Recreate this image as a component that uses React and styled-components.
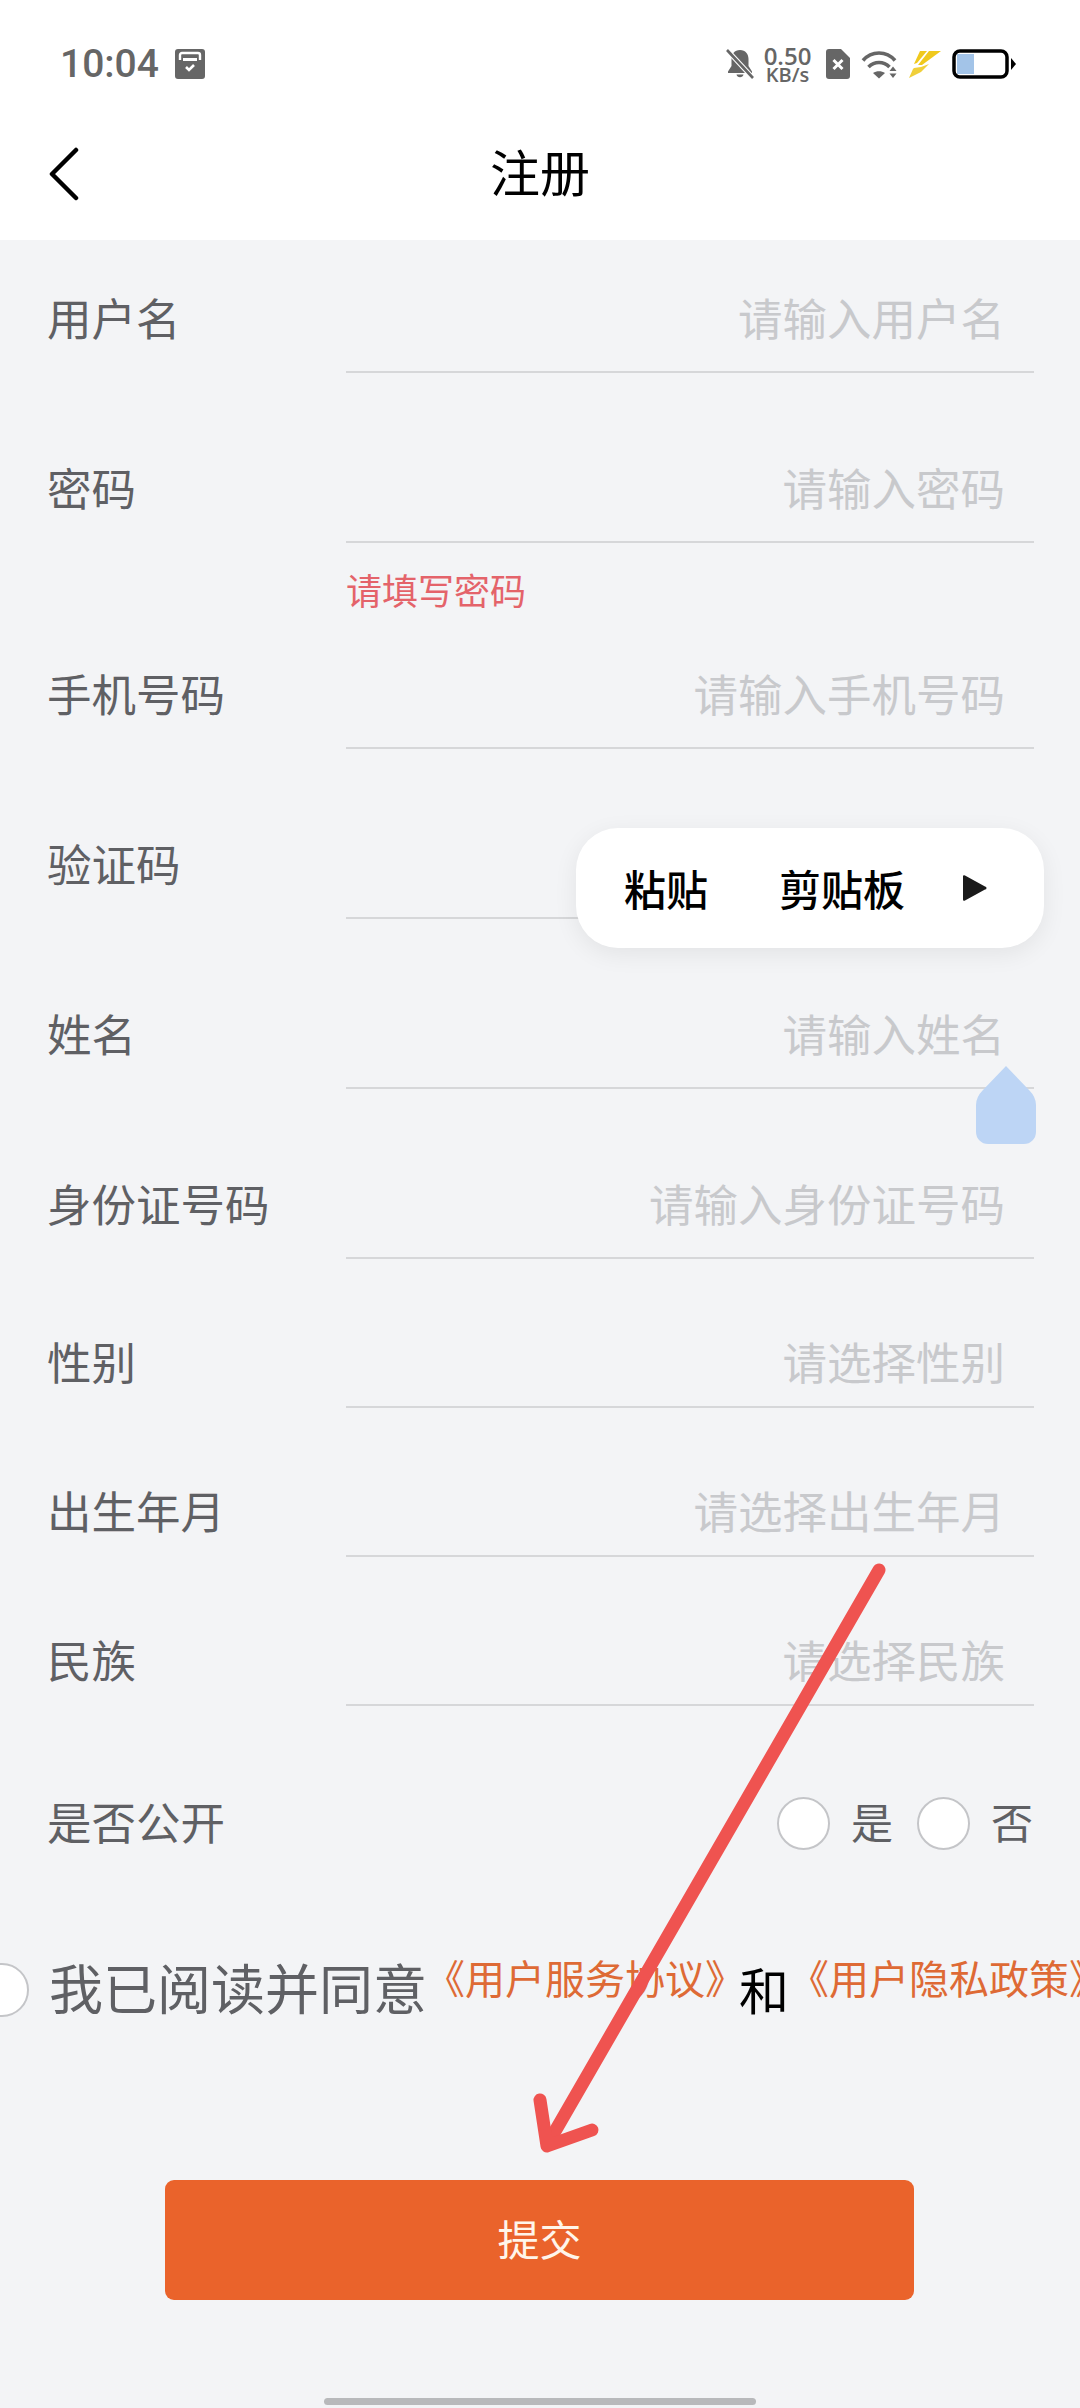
import styled, { createGlobalStyle } from 'styled-components';

const GlobalStyle = createGlobalStyle`
  html, body {
    margin: 0;
    padding: 0;
    background: #f3f4f6;
  }
  * {
    box-sizing: border-box;
  }
`;

const fields = [
  { label: '用户名', hint: '请输入用户名' },
  { label: '密码', hint: '请输入密码', error: '请填写密码' },
  { label: '手机号码', hint: '请输入手机号码' },
  { label: '验证码' },
  { label: '姓名', hint: '请输入姓名' },
  { label: '身份证号码', hint: '请输入身份证号码' },
  { label: '性别', hint: '请选择性别', compact: true },
  { label: '出生年月', hint: '请选择出生年月', compact: true },
  { label: '民族', hint: '请选择民族', compact: true },
];

function BellOffIcon() {
  return (
    <svg width="28" height="30" viewBox="0 0 28 30">
      <path d="M14 1c-5.500 0-8.500 4-8.500 9v7L2 22.500V24h24v-1.500L22.500 17v-7C22.500 5 19.500 1 14 1zM10.500 25.500a3.600 3.600 0 0 0 7 0z" fill="#666" />
      <path d="M1 1l26 28" stroke="#fff" strokeWidth="5" />
      <path d="M1 1l26 28" stroke="#666" strokeWidth="2.600" />
    </svg>
  );
}

function SimIcon() {
  return (
    <svg width="24" height="30" viewBox="0 0 24 30">
      <path d="M3 0h12l9 9v18a3 3 0 0 1-3 3H3a3 3 0 0 1-3-3V3a3 3 0 0 1 3-3z" fill="#666" />
      <path d="M7.500 11l9 9M16.500 11l-9 9" stroke="#fff" strokeWidth="3" />
    </svg>
  );
}

function WifiIcon() {
  return (
    <svg width="36" height="30" viewBox="0 0 36 30">
      <path d="M2 11.500C10.500 1.500 25.500 1.500 34 11.500" fill="none" stroke="#666" strokeWidth="3.600" />
      <path d="M7.500 18c6-6 15-6 21 0" fill="none" stroke="#666" strokeWidth="3.600" />
      <path d="M12 24l6 5.500 6-5.500c-3.500-2.500-8.500-2.500-12 0z" fill="#666" />
      <path d="M28.500 22l3.500-4.500 3.500 4.500zM28.500 24.500l3.500 4.500 3.500-4.500z" fill="#666" />
    </svg>
  );
}

function BoltIcon() {
  return (
    <svg width="33" height="30" viewBox="0 0 33 30">
      <path d="M12 2h7L9 14l-3 1z" fill="#f0c91d" />
      <path d="M21 2h12L14 16l-4 0z" fill="#f0c91d" />
      <path d="M6 19l7-1 8-3-8 8-12 6 4-9z" fill="#f0cf3a" />
    </svg>
  );
}

function BatteryIcon() {
  return (
    <svg width="64" height="30" viewBox="0 0 64 30">
      <rect x="2" y="2" width="53" height="26" rx="6" fill="#fff" stroke="#000" strokeWidth="3.500" />
      <rect x="5" y="5" width="17" height="20" fill="#a3c4e8" />
      <path d="M59 9l5 6-5 6z" fill="#000" />
    </svg>
  );
}

function App() {
  return (
    <Page>
      <GlobalStyle />
      <StatusBar>
        <StatusLeft>
          <Time>10:04</Time>
          <svg width="30" height="30" viewBox="0 0 30 30">
            <rect width="30" height="30" rx="3" fill="#666" />
            <path d="M5 11V6a2 2 0 0 1 2-2h16a2 2 0 0 1 2 2v5" fill="none" stroke="#fff" strokeWidth="2.400" />
            <rect x="8" y="9" width="14" height="3" fill="#fff" />
            <path d="M11 18l3 3 5-5" fill="none" stroke="#fff" strokeWidth="2.600" />
          </svg>
        </StatusLeft>
        <StatusRight>
          <BellOffIcon />
          <Speed>
            <SpeedValue>0.50</SpeedValue>
            <SpeedUnit>KB/s</SpeedUnit>
          </Speed>
          <SimIcon />
          <WifiIcon />
          <BoltIcon />
          <BatteryIcon />
        </StatusRight>
      </StatusBar>

      <NavBar>
        <BackButton>
          <svg width="32" height="54" viewBox="0 0 32 54">
            <path d="M28 3L4 27l24 24" fill="none" stroke="#000" strokeWidth="4.500" strokeLinecap="round" strokeLinejoin="round" />
          </svg>
        </BackButton>
        <Title>注册</Title>
      </NavBar>

      <Form>
        {fields.map((item) => (
          <div key={item.label}>
            <Row $compact={item.compact}>
              <Label>{item.label}</Label>
              <Field>{item.hint && <Hint>{item.hint}</Hint>}</Field>
            </Row>
            {item.error && <ErrorText>{item.error}</ErrorText>}
          </div>
        ))}
      </Form>

      <PublicRow>
        <Label>是否公开</Label>
        <Choices>
          <Radio />
          <ChoiceText>是</ChoiceText>
          <Radio />
          <ChoiceText>否</ChoiceText>
        </Choices>
      </PublicRow>

      <AgreeRow>
        <AgreeRadio />
        <AgreeText>我已阅读并同意</AgreeText>
        <AgreeLink>《用户服务协议》</AgreeLink>
        <AgreeAnd>和</AgreeAnd>
        <AgreeLink>《用户隐私政策》</AgreeLink>
      </AgreeRow>

      <SubmitButton>提交</SubmitButton>
      <HomeBar />

      <PasteMenu>
        <PasteItem>粘贴</PasteItem>
        <PasteItem>剪贴板</PasteItem>
        <svg width="26" height="30" viewBox="0 0 24 30">
          <path d="M2 2.500L22 13.500a1.500 1.500 0 0 1 0 3L2 27.500a1.200 1.200 0 0 1-2-1V3.500a1.200 1.200 0 0 1 2-1z" fill="#1a1a1a" />
        </svg>
      </PasteMenu>

      <CursorHandle viewBox="0 0 60 78">
        <path d="M30 0L53 24q7 7 7 15v27a12 12 0 0 1-12 12H12A12 12 0 0 1 0 66V39q0-8 7-15z" fill="#bdd5f5" />
      </CursorHandle>

      <ArrowMark viewBox="0 0 1080 2408">
        <path d="M879 1570L550 2140" stroke="#ef5350" strokeWidth="13" strokeLinecap="round" fill="none" />
        <path d="M540 2100L547 2146L592 2130" stroke="#ef5350" strokeWidth="13" strokeLinecap="round" strokeLinejoin="round" fill="none" />
      </ArrowMark>
    </Page>
  );
}

export default App;

const cjk = `"Noto Sans CJK SC", "Noto Sans", sans-serif`;

//STYLED COMPONENTS
const Page = styled.div`
  position: relative;
  width: 1080px;
  height: 2408px;
  overflow: hidden;
  background: #f3f4f6;
  font-family: ${cjk};
  color: #5f6064;
`;

const StatusBar = styled.div`
  display: flex;
  justify-content: space-between;
  align-items: center;
  height: 128px;
  padding: 0 64px 0 60px;
  background: #fff;
`;

const StatusLeft = styled.div`
  display: flex;
  align-items: center;
  gap: 16px;
`;

const Time = styled.span`
  font-family: Roboto, sans-serif;
  font-size: 39px;
  font-weight: 500;
  color: #666;
`;

const StatusRight = styled.div`
  display: flex;
  align-items: center;
  gap: 11px;
`;

const Speed = styled.div`
  display: flex;
  flex-direction: column;
  align-items: center;
  width: 50px;
  padding-right: 5px;
  font-family: "Open Sans", sans-serif;
  font-weight: 600;
  color: #666;
`;

const SpeedValue = styled.span`
  font-size: 24px;
  line-height: 20px;
`;

const SpeedUnit = styled.span`
  font-size: 20px;
  line-height: 17px;
`;

const NavBar = styled.div`
  position: relative;
  display: flex;
  align-items: center;
  justify-content: center;
  height: 112px;
  background: #fff;
`;

const BackButton = styled.div`
  position: absolute;
  left: 48px;
  top: 19px;
  height: 54px;
`;

const Title = styled.h1`
  margin: 0 0 28px;
  font-size: 50px;
  font-weight: 400;
  color: #000;
`;

const Form = styled.div`
  display: flex;
  flex-direction: column;
  > div:first-child > div:first-child {
    margin-top: 25px;
  }
`;

const Row = styled.div`
  display: flex;
  height: ${(p) => (p.$compact ? '90px' : '108px')};
  margin-top: ${(p) => (p.$compact ? '59px' : '62px')};
  padding-left: 47px;
`;

const Label = styled.span`
  align-self: center;
  width: 299px;
  flex-shrink: 0;
  margin-bottom: 5px;
  font-size: 44.500px;
  line-height: 60px;
  color: #5f6064;
`;

const Field = styled.div`
  display: flex;
  align-items: center;
  justify-content: flex-end;
  width: 688px;
  padding-right: 29px;
  border-bottom: 2px solid #d6d7d9;
`;

const Hint = styled.span`
  margin-bottom: 3px;
  font-size: 44.500px;
  line-height: 60px;
  color: #c8c9cc;
`;

const ErrorText = styled.div`
  margin: 22px 0 -34px 346px;
  font-size: 36px;
  line-height: 48px;
  color: #e4636a;
`;

const PublicRow = styled.div`
  display: flex;
  align-items: center;
  height: 60px;
  margin-top: 87px;
  padding-left: 47px;
`;

const Choices = styled.div`
  display: flex;
  align-items: center;
  margin-left: 431px;
`;

const Radio = styled.span`
  width: 53px;
  height: 53px;
  border: 2.500px solid #c4c5c8;
  border-radius: 50%;
  background: #fff;
`;

const ChoiceText = styled.span`
  width: 87px;
  margin-bottom: 4px;
  padding-left: 21px;
  font-size: 42px;
  line-height: 60px;
  white-space: nowrap;
`;

const AgreeRow = styled.div`
  display: flex;
  align-items: center;
  width: 1200px;
  height: 60px;
  margin-top: 107px;
  margin-left: -25px;
  white-space: nowrap;
`;

const AgreeRadio = styled(Radio)`
  width: 54px;
  height: 54px;
  margin-right: 20px;
`;

const AgreeText = styled.span`
  width: 376px;
  margin-bottom: 6px;
  font-size: 54px;
  line-height: 60px;
`;

const AgreeLink = styled.span`
  align-self: flex-start;
  margin-top: -3px;
  font-size: 40px;
  line-height: 40px;
  color: #de6a35;
`;

const AgreeAnd = styled.span`
  margin-left: -6px;
  margin-bottom: 4px;
  font-size: 50px;
  line-height: 60px;
  color: #000;
`;

const SubmitButton = styled.button`
  display: block;
  width: 749px;
  height: 120px;
  margin: 160px 0 0 165px;
  padding-bottom: 6px;
  border: 0;
  border-radius: 9px;
  background: #ea632b;
  color: #fff5ea;
  font-family: ${cjk};
  font-size: 42px;
`;

const HomeBar = styled.div`
  width: 432px;
  height: 7px;
  margin: 98px 0 0 324px;
  border-radius: 4px;
  background: #b8b9bb;
`;

const PasteMenu = styled.div`
  position: absolute;
  left: 576px;
  top: 828px;
  display: flex;
  align-items: center;
  width: 468px;
  height: 120px;
  padding-left: 48px;
  border-radius: 42px;
  background: #fff;
  box-shadow: 0 6px 24px rgba(0, 0, 0, 0.07);
`;

const PasteItem = styled.span`
  margin-right: 71px;
  margin-bottom: 2px;
  font-size: 42px;
  font-weight: 500;
  color: #000;
  &:nth-child(2) {
    margin-right: 57px;
  }
`;

const CursorHandle = styled.svg`
  position: absolute;
  left: 976px;
  top: 1066px;
  width: 60px;
  height: 78px;
`;

const ArrowMark = styled.svg`
  position: absolute;
  left: 0;
  top: 0;
  width: 1080px;
  height: 2408px;
  pointer-events: none;
`;
